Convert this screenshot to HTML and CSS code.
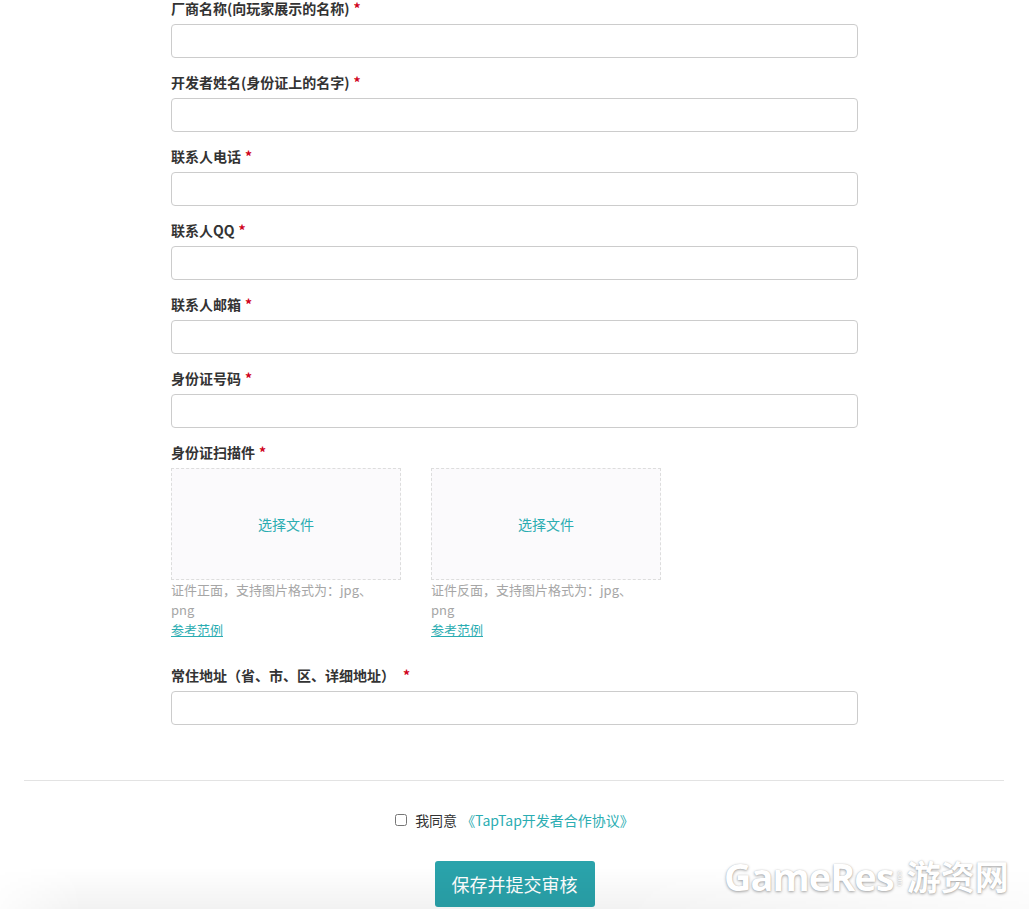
FILE: index.html
```html
<!DOCTYPE html>
<html lang="zh-CN">
<head>
<meta charset="utf-8">
<title>开发者信息</title>
<link rel="stylesheet" href="styles.css">
</head>
<body>
<div class="page">
  <form class="form">
    <div class="field">
      <label class="label">厂商名称(向玩家展示的名称)<span class="req">*</span></label>
      <input class="input" type="text">
    </div>
    <div class="field">
      <label class="label">开发者姓名(身份证上的名字)<span class="req">*</span></label>
      <input class="input" type="text">
    </div>
    <div class="field">
      <label class="label">联系人电话<span class="req">*</span></label>
      <input class="input" type="text">
    </div>
    <div class="field">
      <label class="label">联系人QQ<span class="req">*</span></label>
      <input class="input" type="text">
    </div>
    <div class="field">
      <label class="label">联系人邮箱<span class="req">*</span></label>
      <input class="input" type="text">
    </div>
    <div class="field">
      <label class="label">身份证号码<span class="req">*</span></label>
      <input class="input" type="text">
    </div>
    <div class="field field-upload">
      <label class="label">身份证扫描件<span class="req">*</span></label>
      <div class="uploads">
        <div class="upload">
          <div class="drop">选择文件</div>
          <p class="hint">证件正面，支持图片格式为：jpg、png</p>
          <a class="example" href="#">参考范例</a>
        </div>
        <div class="upload">
          <div class="drop">选择文件</div>
          <p class="hint">证件反面，支持图片格式为：jpg、png</p>
          <a class="example" href="#">参考范例</a>
        </div>
      </div>
    </div>
    <div class="field field-last">
      <label class="label">常住地址（省、市、区、详细地址）<span class="req req-wide">*</span></label>
      <input class="input" type="text">
    </div>
  </form>

  <hr class="divider">

  <div class="agree">
    <input class="check" type="checkbox" id="agree">
    <label for="agree" class="agree-text">我同意</label>
    <a class="agree-link" href="#">《TapTap开发者合作协议》</a>
  </div>

  <div class="actions">
    <button class="submit" type="button">保存并提交审核</button>
  </div>

  <div class="shade"></div>
  <div class="watermark">
    <span class="wm-en">GameRes</span><span class="wm-com">com</span><span class="wm-cn">游资网</span>
  </div>
</div>
</body>
</html>
```

FILE: styles.css
```css
html, body {
  margin: 0;
  padding: 0;
  background: #ffffff;
}

body {
  font-family: "Noto Sans CJK SC", "Noto Sans", "Liberation Sans", sans-serif;
  color: #333333;
  font-size: 14px;
}

.page {
  position: relative;
  width: 1029px;
  height: 909px;
  overflow: hidden;
}

.form {
  width: 687px;
  margin: 0 auto;
  padding: 0;
}

.field {
  display: flex;
  flex-direction: column;
  margin-bottom: 16px;
}

.field-last {
  margin-bottom: 0;
}

.label {
  display: block;
  font-size: 14px;
  line-height: 16px;
  font-weight: bold;
  color: #333333;
  margin-bottom: 8px;
}

.req {
  color: #d0021b;
  margin-left: 4px;
}

.req-wide {
  margin-left: 8px;
}

.input {
  box-sizing: border-box;
  width: 100%;
  height: 34px;
  margin: 0;
  border: 1px solid #cccccc;
  border-radius: 4px;
  background: #ffffff;
}

.field-upload {
  margin-bottom: 27px;
}

.uploads {
  display: flex;
  gap: 30px;
}

.upload {
  width: 230px;
  display: flex;
  flex-direction: column;
}

.drop {
  box-sizing: border-box;
  height: 112px;
  border: 1px dashed #dddddd;
  background: #fbfafc;
  color: #2badb2;
  font-size: 14px;
  display: flex;
  align-items: center;
  justify-content: center;
}

.hint {
  margin: 0;
  width: 218px;
  font-size: 13px;
  line-height: 20px;
  color: #a6a6a6;
}

.example {
  font-size: 13px;
  line-height: 20px;
  color: #2badb2;
  text-decoration: underline;
  align-self: flex-start;
}

.divider {
  margin: 55px 25px 0 24px;
  border: 0;
  border-top: 1px solid #e3e3e3;
  height: 0;
}

.agree {
  display: flex;
  justify-content: center;
  align-items: center;
  margin-top: 29px;
  height: 20px;
  font-size: 14px;
  line-height: 20px;
}

.check {
  width: 12px;
  height: 12px;
  margin: 0 8px 0 0;
}

.agree-text {
  color: #333333;
}

.agree-link {
  color: #2badb2;
  text-decoration: none;
  margin-left: 4px;
}

.actions {
  display: flex;
  justify-content: center;
  margin-top: 31px;
}

.submit {
  height: 46px;
  width: 160px;
  padding: 0;
  border: 0;
  border-radius: 3px;
  background: #2aa3ab;
  color: #ffffff;
  font-family: "Noto Sans CJK SC", "Noto Sans", sans-serif;
  font-size: 18px;
  cursor: pointer;
}

.shade {
  position: absolute;
  left: 0;
  right: 0;
  bottom: 0;
  height: 42px;
  background: linear-gradient(to bottom, rgba(0, 0, 0, 0), rgba(0, 0, 0, 0.05));
  -webkit-mask-image: linear-gradient(to right, rgba(0,0,0,0.2) 0, #000 8%, #000 60%, rgba(0,0,0,0.3) 100%);
  mask-image: linear-gradient(to right, rgba(0,0,0,0.2) 0, #000 8%, #000 60%, rgba(0,0,0,0.3) 100%);
  pointer-events: none;
}

.watermark {
  position: absolute;
  left: 724px;
  top: 852px;
  display: flex;
  align-items: center;
  color: #ffffff;
  text-shadow: 0 1px 3px rgba(0, 0, 0, 0.35), 0 0 1px rgba(0, 0, 0, 0.2);
  white-space: nowrap;
}

.wm-en {
  font-family: "Open Sans", "Liberation Sans", sans-serif;
  font-weight: 700;
  font-size: 38px;
  line-height: 48px;
  letter-spacing: -1px;
}

.wm-com {
  display: inline-block;
  font-family: "Liberation Sans", sans-serif;
  font-size: 8px;
  line-height: 8px;
  writing-mode: vertical-rl;
  margin: 6px 3px 0 2px;
}

.wm-cn {
  font-family: "Noto Sans CJK SC", sans-serif;
  font-weight: bold;
  font-size: 34px;
  line-height: 48px;
  letter-spacing: 0;
}
```
